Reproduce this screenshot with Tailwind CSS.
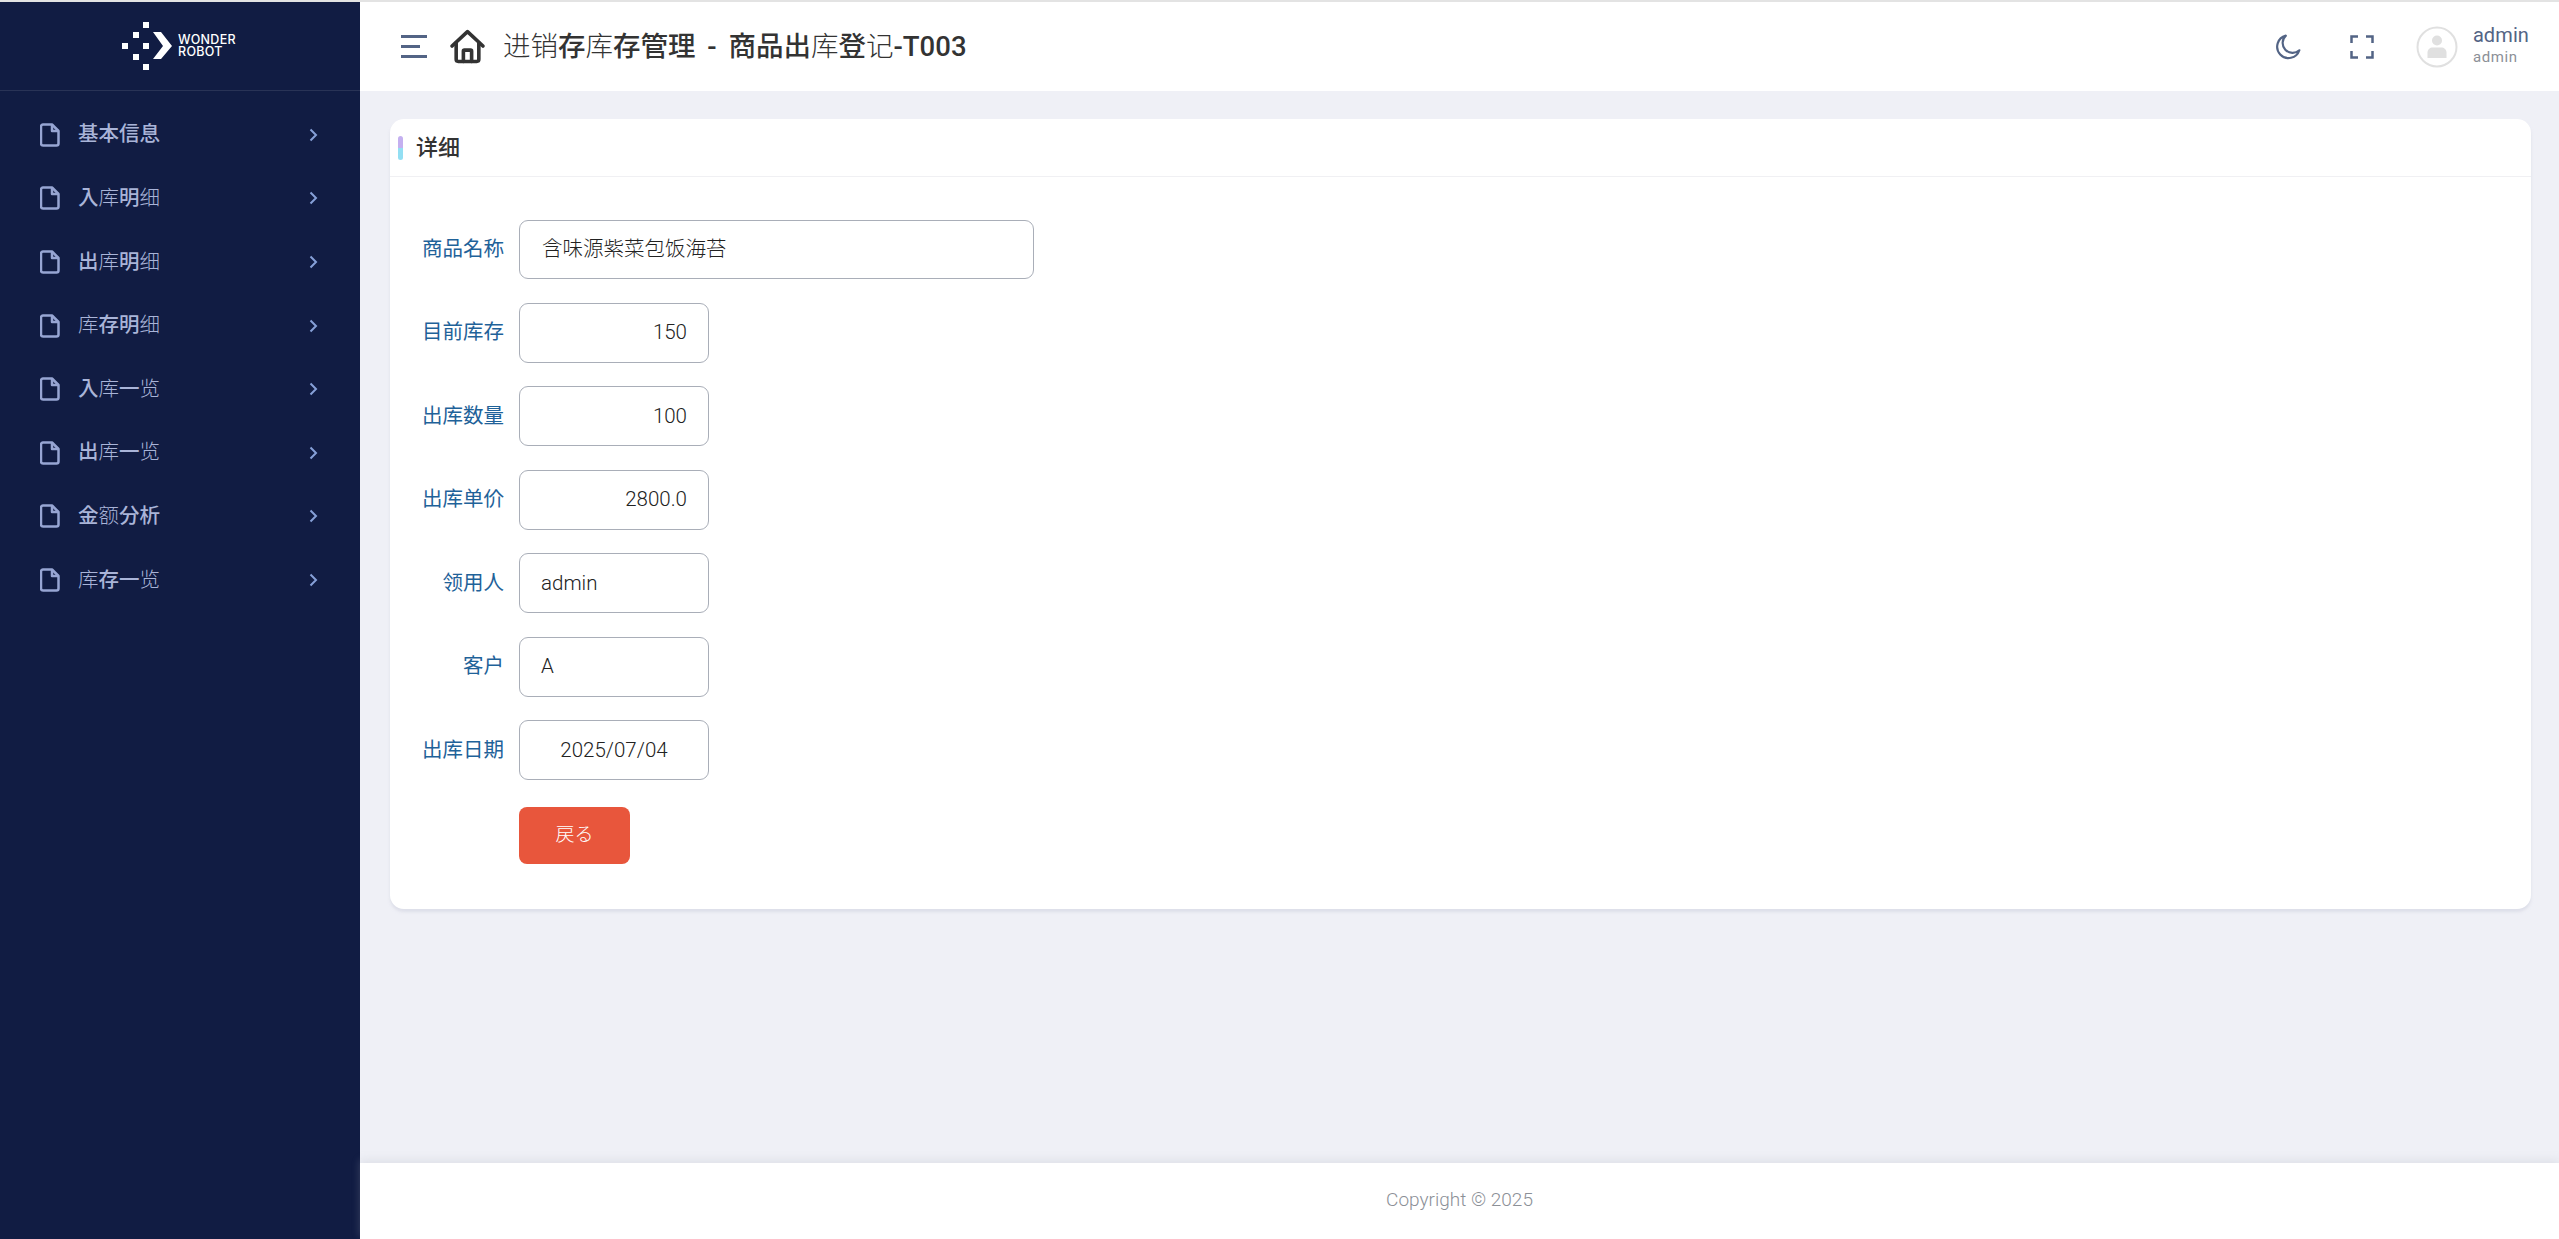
<!DOCTYPE html>
<html lang="ja">

<head>
	<title>商品出库登记</title>
	<meta charset="UTF-8">
	<meta name="viewport" content="width=device-width, initial-scale=1.0">
	<script src="https://cdn.jsdelivr.net/npm/@tailwindcss/browser@4"></script>
</head>

<body class="h-screen overflow-hidden bg-[#eff0f6] font-['Roboto','Noto_Sans_CJK_JP',sans-serif]">
	<div class="flex flex-col h-full border-t-2 border-[#e3e3e3]">
		<div class="flex flex-1 min-h-0">

			<!-- sidebar -->
			<aside class="w-[360px] shrink-0 bg-[#111c43] flex flex-col">
				<div class="h-[89px] border-b border-white/10 flex items-center pl-[122px] shrink-0">
					<svg class="w-[52px] h-[48px] shrink-0" viewBox="0 0 52 48" fill="#fff">
						<rect x="21" y="0" width="6" height="6" />
						<rect x="11" y="10" width="6" height="6" />
						<rect x="0" y="21" width="6" height="6" />
						<rect x="21" y="21" width="6" height="6" />
						<rect x="11" y="32" width="6" height="6" />
						<rect x="21" y="42" width="6" height="6" />
						<polygon points="31,10 39,10 50,24 39,37 31,37 41,24" />
					</svg>
					<div class="ml-[4px] font-['Inter',sans-serif] font-medium text-[12.5px] leading-[12px] text-white tracking-[0.3px]">WONDER<br>ROBOT</div>
				</div>
				<nav class="pt-[12px] flex flex-col text-[20.5px] text-[#a9b4d8]">
					<a class="h-[63.6px] flex items-center pl-[40px] pr-[42px]">
						<svg class="w-[20px] h-[24px] mr-[18px]" viewBox="0 0 20 24" fill="none" stroke="#97a5d3" stroke-width="2.500" stroke-linejoin="round"><path d="M3 1.500h9l6.500 6.500v12.500a2 2 0 0 1-2 2H3a2 2 0 0 1-2-2v-17a2 2 0 0 1 2-2z" /><path d="M12 1.500v6.500h6.500" /></svg>
						<span class="flex-1 font-medium">基本信息</span>
						<svg class="w-[9px] h-[14px]" viewBox="0 0 9 14" fill="none" stroke="#86a0d8" stroke-width="2"><path d="M1.500 1.500 7 7l-5.500 5.500" /></svg>
					</a>
					<a class="h-[63.6px] flex items-center pl-[40px] pr-[42px]">
						<svg class="w-[20px] h-[24px] mr-[18px]" viewBox="0 0 20 24" fill="none" stroke="#97a5d3" stroke-width="2.500" stroke-linejoin="round"><path d="M3 1.500h9l6.500 6.500v12.500a2 2 0 0 1-2 2H3a2 2 0 0 1-2-2v-17a2 2 0 0 1 2-2z" /><path d="M12 1.500v6.500h6.500" /></svg>
						<span class="flex-1 font-medium">入<span class="font-light">库</span>明<span class="font-light">细</span></span>
						<svg class="w-[9px] h-[14px]" viewBox="0 0 9 14" fill="none" stroke="#86a0d8" stroke-width="2"><path d="M1.500 1.500 7 7l-5.500 5.500" /></svg>
					</a>
					<a class="h-[63.6px] flex items-center pl-[40px] pr-[42px]">
						<svg class="w-[20px] h-[24px] mr-[18px]" viewBox="0 0 20 24" fill="none" stroke="#97a5d3" stroke-width="2.500" stroke-linejoin="round"><path d="M3 1.500h9l6.500 6.500v12.500a2 2 0 0 1-2 2H3a2 2 0 0 1-2-2v-17a2 2 0 0 1 2-2z" /><path d="M12 1.500v6.500h6.500" /></svg>
						<span class="flex-1 font-medium">出<span class="font-light">库</span>明<span class="font-light">细</span></span>
						<svg class="w-[9px] h-[14px]" viewBox="0 0 9 14" fill="none" stroke="#86a0d8" stroke-width="2"><path d="M1.500 1.500 7 7l-5.500 5.500" /></svg>
					</a>
					<a class="h-[63.6px] flex items-center pl-[40px] pr-[42px]">
						<svg class="w-[20px] h-[24px] mr-[18px]" viewBox="0 0 20 24" fill="none" stroke="#97a5d3" stroke-width="2.500" stroke-linejoin="round"><path d="M3 1.500h9l6.500 6.500v12.500a2 2 0 0 1-2 2H3a2 2 0 0 1-2-2v-17a2 2 0 0 1 2-2z" /><path d="M12 1.500v6.500h6.500" /></svg>
						<span class="flex-1 font-medium"><span class="font-light">库</span>存明<span class="font-light">细</span></span>
						<svg class="w-[9px] h-[14px]" viewBox="0 0 9 14" fill="none" stroke="#86a0d8" stroke-width="2"><path d="M1.500 1.500 7 7l-5.500 5.500" /></svg>
					</a>
					<a class="h-[63.6px] flex items-center pl-[40px] pr-[42px]">
						<svg class="w-[20px] h-[24px] mr-[18px]" viewBox="0 0 20 24" fill="none" stroke="#97a5d3" stroke-width="2.500" stroke-linejoin="round"><path d="M3 1.500h9l6.500 6.500v12.500a2 2 0 0 1-2 2H3a2 2 0 0 1-2-2v-17a2 2 0 0 1 2-2z" /><path d="M12 1.500v6.500h6.500" /></svg>
						<span class="flex-1 font-medium">入<span class="font-light">库</span>一<span class="font-light">览</span></span>
						<svg class="w-[9px] h-[14px]" viewBox="0 0 9 14" fill="none" stroke="#86a0d8" stroke-width="2"><path d="M1.500 1.500 7 7l-5.500 5.500" /></svg>
					</a>
					<a class="h-[63.6px] flex items-center pl-[40px] pr-[42px]">
						<svg class="w-[20px] h-[24px] mr-[18px]" viewBox="0 0 20 24" fill="none" stroke="#97a5d3" stroke-width="2.500" stroke-linejoin="round"><path d="M3 1.500h9l6.500 6.500v12.500a2 2 0 0 1-2 2H3a2 2 0 0 1-2-2v-17a2 2 0 0 1 2-2z" /><path d="M12 1.500v6.500h6.500" /></svg>
						<span class="flex-1 font-medium">出<span class="font-light">库</span>一<span class="font-light">览</span></span>
						<svg class="w-[9px] h-[14px]" viewBox="0 0 9 14" fill="none" stroke="#86a0d8" stroke-width="2"><path d="M1.500 1.500 7 7l-5.500 5.500" /></svg>
					</a>
					<a class="h-[63.6px] flex items-center pl-[40px] pr-[42px]">
						<svg class="w-[20px] h-[24px] mr-[18px]" viewBox="0 0 20 24" fill="none" stroke="#97a5d3" stroke-width="2.500" stroke-linejoin="round"><path d="M3 1.500h9l6.500 6.500v12.500a2 2 0 0 1-2 2H3a2 2 0 0 1-2-2v-17a2 2 0 0 1 2-2z" /><path d="M12 1.500v6.500h6.500" /></svg>
						<span class="flex-1 font-medium">金<span class="font-light">额</span>分析</span>
						<svg class="w-[9px] h-[14px]" viewBox="0 0 9 14" fill="none" stroke="#86a0d8" stroke-width="2"><path d="M1.500 1.500 7 7l-5.500 5.500" /></svg>
					</a>
					<a class="h-[63.6px] flex items-center pl-[40px] pr-[42px]">
						<svg class="w-[20px] h-[24px] mr-[18px]" viewBox="0 0 20 24" fill="none" stroke="#97a5d3" stroke-width="2.500" stroke-linejoin="round"><path d="M3 1.500h9l6.500 6.500v12.500a2 2 0 0 1-2 2H3a2 2 0 0 1-2-2v-17a2 2 0 0 1 2-2z" /><path d="M12 1.500v6.500h6.500" /></svg>
						<span class="flex-1 font-medium"><span class="font-light">库</span>存一<span class="font-light">览</span></span>
						<svg class="w-[9px] h-[14px]" viewBox="0 0 9 14" fill="none" stroke="#86a0d8" stroke-width="2"><path d="M1.500 1.500 7 7l-5.500 5.500" /></svg>
					</a>
				</nav>
			</aside>

			<div class="flex-1 min-w-0 flex flex-col">
				<!-- header -->
				<header class="h-[89px] shrink-0 bg-white flex items-center pl-[41px] pr-[30px]">
					<svg class="w-[26px] h-[23px]" viewBox="0 0 26 23" fill="#536485"><rect x="0" y="0" width="26" height="3" /><rect x="0" y="10" width="19" height="3" /><rect x="0" y="20" width="26" height="3" /></svg>
					<svg class="w-[35px] h-[35px] ml-[23px]" viewBox="0 0 34 33" fill="none" stroke="#333" stroke-width="3.500" stroke-linejoin="round" stroke-linecap="round"><path d="M2 16 17 2l15 14" /><path d="M6 13v16a2 2 0 0 0 2 2h18a2 2 0 0 0 2-2V13" /><path d="M13 31V21a1 1 0 0 1 1-1h6a1 1 0 0 1 1 1v10" /></svg>
					<h1 class="ml-[18px] text-[27.5px] font-medium text-[#333] [word-spacing:5px]"><span class="font-light">进销</span>存<span class="font-light">库</span>存管理 - 商品出<span class="font-light">库</span>登<span class="font-light">记</span>-T003</h1>
					<div class="ml-auto flex items-center">
						<svg class="w-[26px] h-[26px]" viewBox="0 0 24 24" fill="none" stroke="#536485" stroke-width="2" stroke-linejoin="round"><path d="M10 1.500a10.500 10.500 0 1 0 12.500 13.500 9 9 0 0 1-12.500-13.500z" /></svg>
						<svg class="w-[24px] h-[24px] ml-[49px]" viewBox="0 0 24 24" fill="none" stroke="#536485" stroke-width="2.500"><path d="M1.500 8V1.500H8M16 1.500h6.500V8M22.500 16v6.500H16M8 22.500H1.500V16" /></svg>
						<svg class="w-[42px] h-[42px] ml-[42px]" viewBox="0 0 42 42" fill="#e0e0e0"><circle cx="21" cy="21" r="19.500" fill="#fff" stroke="#e0e0e0" stroke-width="2" /><circle cx="21" cy="14.500" r="5" /><path d="M11.500 32v-5.500c0-3 2.500-5 5-5h9c2.500 0 5 2 5 5V32z" /></svg>
						<div class="ml-[15px] flex flex-col mb-[3px]">
							<span class="text-[20px] leading-[24px] text-[#536485] tracking-[0.1px]">admin</span>
							<span class="text-[15px] leading-[20px] text-[#8c9097] tracking-[0.6px]">admin</span>
						</div>
					</div>
				</header>

				<!-- content -->
				<main class="flex-1 min-h-0 pt-[28px] pl-[30px] pr-[28px]">
					<section class="bg-white rounded-[14px] shadow-[0_3px_3px_rgba(210,212,225,0.6)] h-[790px]">
						<div class="h-[58px] border-b border-[#f0f0f3] flex items-center pl-[8px]">
							<div class="w-[5px] h-[24px] rounded-full bg-gradient-to-b from-[#c4b0f0] from-50% to-[#93dff3] to-50%"></div>
							<h2 class="ml-[13px] text-[22px] font-medium text-[#333]">详细</h2>
						</div>
						<div class="pt-[43px] flex flex-col gap-[23.500px] text-[20.500px] font-light text-[#222]">
							<div class="flex items-center">
								<label class="w-[114px] text-right text-[20.500px] font-normal text-[#1f6299]">商品名称</label>
								<div class="ml-[15px] w-[515px] h-[59px] border border-[#a9aeb8] rounded-[9px] flex items-center px-[22px]">含味源紫菜包饭海苔</div>
							</div>
							<div class="flex items-center">
								<label class="w-[114px] text-right text-[20.500px] font-normal text-[#1f6299]">目前库存</label>
								<div class="ml-[15px] w-[190px] h-[60px] border border-[#a9aeb8] rounded-[9px] flex items-center justify-end px-[21px]">150</div>
							</div>
							<div class="flex items-center">
								<label class="w-[114px] text-right text-[20.500px] font-normal text-[#1f6299]">出库数量</label>
								<div class="ml-[15px] w-[190px] h-[60px] border border-[#a9aeb8] rounded-[9px] flex items-center justify-end px-[21px]">100</div>
							</div>
							<div class="flex items-center">
								<label class="w-[114px] text-right text-[20.500px] font-normal text-[#1f6299]">出库单价</label>
								<div class="ml-[15px] w-[190px] h-[60px] border border-[#a9aeb8] rounded-[9px] flex items-center justify-end px-[21px]">2800.0</div>
							</div>
							<div class="flex items-center">
								<label class="w-[114px] text-right text-[20.500px] font-normal text-[#1f6299]">领用人</label>
								<div class="ml-[15px] w-[190px] h-[60px] border border-[#a9aeb8] rounded-[9px] flex items-center px-[21px]">admin</div>
							</div>
							<div class="flex items-center">
								<label class="w-[114px] text-right text-[20.500px] font-normal text-[#1f6299]">客户</label>
								<div class="ml-[15px] w-[190px] h-[60px] border border-[#a9aeb8] rounded-[9px] flex items-center px-[21px]">A</div>
							</div>
							<div class="flex items-center">
								<label class="w-[114px] text-right text-[20.500px] font-normal text-[#1f6299]">出库日期</label>
								<div class="ml-[15px] w-[190px] h-[60px] border border-[#a9aeb8] rounded-[9px] flex items-center justify-center">2025/07/04</div>
							</div>
							<div class="flex pl-[129px] mt-[3px]">
								<button class="w-[111px] h-[57px] rounded-[8px] bg-[#e8563c] text-white text-[19px] font-light">戻る</button>
							</div>
						</div>
					</section>
				</main>

				<!-- footer -->
				<footer class="h-[76px] shrink-0 bg-white shadow-[0_-3px_8px_rgba(180,182,195,0.25)] flex items-center justify-center pb-[2px] text-[19px] font-light text-[#8c9097]">Copyright © 2025</footer>
			</div>
		</div>
	</div>
</body>

</html>
